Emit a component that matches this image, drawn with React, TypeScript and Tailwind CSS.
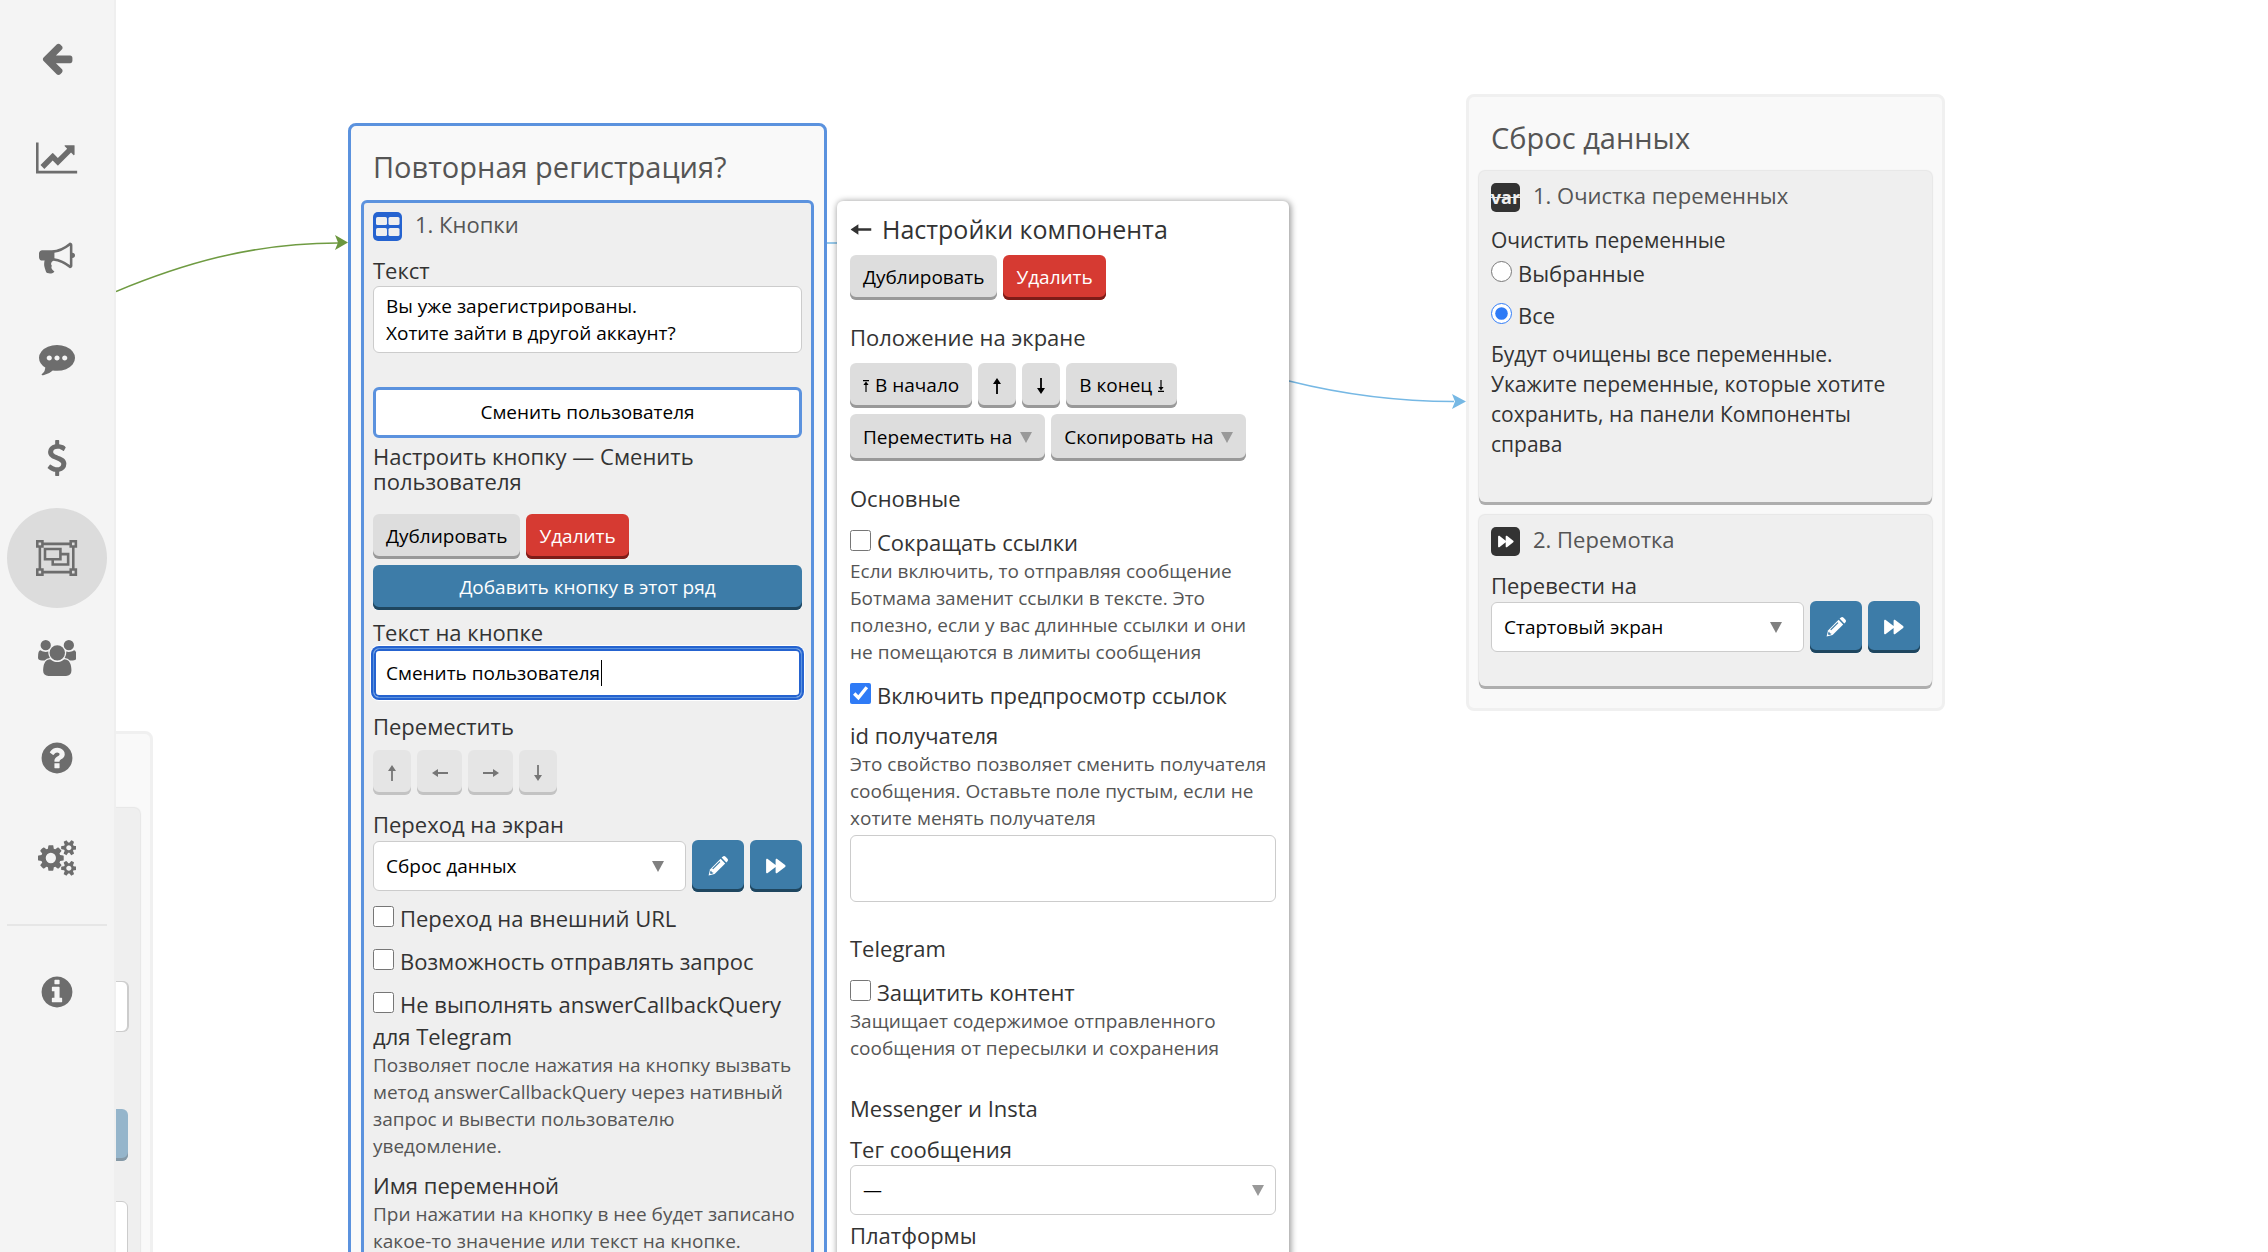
import type { ComponentProps, ReactNode } from "react";
import clsx from "clsx";

type Glyph = { w: number; d: string; rule?: "evenodd" };

// sidebar glyphs, drawn on a 1792 unit high grid
const GLYPHS = {
  back: {
    w: 1792,
    d: "M1664 896v128q0 53-32.5 90.5t-84.5 37.5h-704l293 294q38 36 38 90t-38 90l-75 76q-37 37-90 37-52 0-91-37l-651-652q-37-37-37-90 0-52 37-91l651-650q38-38 91-38 52 0 90 38l75 74q38 38 38 91t-38 91l-293 293h704q52 0 84.5 37.5t32.5 90.5z",
  },
  chart: {
    w: 2048,
    d: "M2048 1536v128h-2048v-1536h128v1408h1920zm-128-1248v435q0 21-19.5 29.5t-35.5-7.5l-121-121-633 633q-10 10-23 10t-23-10l-233-233-416 416-192-192 585-585q10-10 23-10t23 10l233 233 464-464-121-121q-16-16-7.5-35.5t29.5-19.5h435q14 0 23 9t9 23z",
  },
  bullhorn: {
    w: 1792,
    d: "M1664 640q53 0 90.5 37.5t37.5 90.5-37.5 90.5-90.5 37.5v384q0 52-38 90t-90 38q-417-347-812-380-58 19-91 66t-31 100.5 40 92.5q-20 33-23 65.5t6 58 33.5 55 48 50 61.5 50.5q-29 58-111.5 83t-168.5 11.5-132-55.5q-7-23-29.5-87.5t-32-94.5-23-89-15-101 3.5-98.5 22-110.5h-122q-66 0-113-47t-47-113v-192q0-66 47-113t113-47h480q435 0 896-384 52 0 90 38t38 90v384zm-128 604v-954q-394 302-768 343v270q377 42 768 341z",
  },
  comment: {
    w: 1792,
    d: "M640 896q0-53-37.5-90.5t-90.5-37.5-90.5 37.5-37.5 90.5 37.5 90.5 90.5 37.5 90.5-37.5 37.5-90.5zm384 0q0-53-37.5-90.5t-90.5-37.5-90.5 37.5-37.5 90.5 37.5 90.5 90.5 37.5 90.5-37.5 37.5-90.5zm384 0q0-53-37.5-90.5t-90.5-37.5-90.5 37.5-37.5 90.5 37.5 90.5 90.5 37.5 90.5-37.5 37.5-90.5zm384 0q0 174-120 321.5t-326 233-450 85.5q-110 0-211-18-173 173-435 221-52 10-86 13-12 1-22-6t-13-18q-4-15 20-37 5-5 23.5-21.5t25.5-23.5 23.5-25.5 24-31.5 20.5-37 20-48 14.5-57.5 12.5-72.5q-146-90-229.5-216.5t-83.5-269.5q0-174 120-321.5t326-233 450-85.5 450 85.5 326 233 120 321.5z",
  },
  dollar: {
    w: 1792,
    d: "M1362 1185q0 153-99.5 263.5t-258.5 136.5v175q0 14-9 23t-23 9h-135q-13 0-22.5-9.5t-9.5-22.5v-175q-66-9-127.5-31t-101.5-44.5-74-48-46.5-37.5-17.5-18q-17-21-2-41l103-135q7-10 23-12 15-2 24 9l2 2q113 99 243 125 37 8 74 8 81 0 142.5-43t61.5-122q0-28-15-53t-33.5-42-58.5-37.5-66-32-80-32.5q-39-16-61.5-25t-61.5-26.5-62.5-31-56.5-35.5-53.5-42.5-43.5-49-35.5-58-21-66.5-8.5-78q0-138 98-242t255-134v-180q0-13 9.5-22.5t22.5-9.5h135q14 0 23 9t9 23v176q57 6 110.5 23t87 33.5 63.5 37.5 39 29 15 14q17 18 5 38l-81 146q-8 15-23 16-14 3-27-7-3-3-14.5-12t-39-26.5-58.5-32-74.5-26-85.5-11.5q-95 0-155 43t-60 111q0 26 8.5 48t29.5 41.5 39.5 33 56 31 60.5 27 70 27.5q53 20 81 31.5t76 35 75.5 42.5 62 50 53 63.5 31.5 76.5 13 94z",
  },
  group: {
    w: 2048,
    rule: "evenodd",
    d: "M2048 384h-128v1024h128v384h-384v-128h-1280v128h-384v-384h128v-1024h-128v-384h384v128h1280v-128h384zM1792 128v128h128v-128zM128 128v128h128v-128zM128 1536v128h128v-128zM1792 1536v128h128v-128zM384 256v128h-128v1024h128v128h1280v-128h128v-1024h-128v-128zM1664 640v640h-896v-256h-384v-640h896v256zM512 512v384h640v-384zM1536 768h-256v256h-384v128h640z",
  },
  users: {
    w: 1920,
    d: "M593 896q-162 5-265 128h-134q-82 0-138-40.5t-56-118.5q0-353 124-353 6 0 43.500 21t97.500 42.500 119 21.500q67 0 133-23-5 37-5 66 0 139 81 256zm1071 637q0 120-73 189.500t-194 69.500h-874q-121 0-194-69.500t-73-189.500q0-53 3.500-103.500t14-109 26.500-108.500 43-97.500 62-81 85.500-53.500 111.500-20q10 0 43 21.500t73 48 107 48 135 21.500 135-21.500 107-48 73-48 43-21.500q61 0 111.500 20t85.500 53.500 62 81 43 97.500 26.500 108.500 14 109 3.500 103.500zm-1024-1277q0 106-75 181t-181 75-181-75-75-181 75-181 181-75 181 75 75 181zm704 384q0 159-112.500 271.500t-271.500 112.500-271.500-112.500-112.500-271.500 112.500-271.500 271.500-112.500 271.500 112.500 112.500 271.500zm576 225q0 78-56 118.500t-138 40.500h-134q-103-123-265-128 81-117 81-256 0-29-5-66 66 23 133 23 59 0 119-21.500t97.500-42.500 43.500-21q124 0 124 353zm-128-609q0 106-75 181t-181 75-181-75-75-181 75-181 181-75 181 75 75 181z",
  },
  question: {
    w: 1792,
    d: "M1024 1376v-192q0-14-9-23t-23-9h-192q-14 0-23 9t-9 23v192q0 14 9 23t23 9h192q14 0 23-9t9-23zm256-672q0-88-55.5-163t-138.5-116-170-41q-243 0-371 213-15 24 8 42l132 100q7 6 19 6 16 0 25-12 53-68 86-92 34-24 86-24 48 0 85.5 26t37.5 59q0 38-20 61t-68 45q-63 28-115.5 86.5t-52.5 125.5v36q0 14 9 23t23 9h192q14 0 23-9t9-23q0-19 21.5-49.5t54.5-49.5q32-18 49-28.5t46-35 44.5-48 28-60.5 12.5-81zm384 192q0 209-103 385.5t-279.5 279.5-385.5 103-385.5-103-279.5-279.5-103-385.5 103-385.5 279.5-279.5 385.5-103 385.5 103 279.5 279.5 103 385.5z",
  },
  cogs: {
    w: 1920,
    d: "M896 896q0-106-75-181t-181-75-181 75-75 181 75 181 181 75 181-75 75-181zm768 512q0-52-38-90t-90-38-90 38-38 90q0 53 37.5 90.5t90.5 37.5 90.5-37.5 37.5-90.5zm0-1024q0-52-38-90t-90-38-90 38-38 90q0 53 37.5 90.5t90.5 37.5 90.5-37.5 37.5-90.5zm-384 421v185q0 10-7 19.5t-16 10.5l-155 24q-11 35-32 76 34 48 90 115 7 11 7 20 0 12-7 19-23 30-82.5 89.5t-78.5 59.5q-11 0-21-7l-115-90q-37 19-77 31-11 108-23 155-7 24-30 24h-186q-11 0-20-7.5t-10-17.5l-23-153q-34-10-75-31l-118 89q-7 7-20 7-11 0-21-8-144-133-144-160 0-9 7-19 10-14 41-53t47-61q-23-44-35-82l-152-24q-10-1-17-9.5t-7-19.5v-185q0-10 7-19.5t16-10.5l155-24q11-35 32-76-34-48-90-115-7-11-7-20 0-12 7-20 22-30 82-89t79-59q11 0 21 7l115 90q34-18 77-32 11-108 23-154 7-24 30-24h186q11 0 20 7.5t10 17.5l23 153q34 10 75 31l118-89q8-7 20-7 11 0 21 8 144 133 144 160 0 8-7 19-12 16-42 54t-45 60q23 48 34 82l152 23q10 2 17 10.5t7 19.5zm640 533v140q0 16-149 31-12 27-30 52 51 113 51 138 0 4-4 7-122 71-124 71-8 0-46-47t-52-68q-20 2-30 2t-30-2q-14 21-52 68t-46 47q-2 0-124-71-4-3-4-7 0-25 51-138-18-25-30-52-149-15-149-31v-140q0-16 149-31 13-29 30-52-51-113-51-138 0-4 4-7 4-2 35-20t59-34 30-16q8 0 46 46.5t52 67.5q20-2 30-2t30 2q51-71 92-112l6-2q4 0 124 70 4 3 4 7 0 25-51 138 17 23 30 52 149 15 149 31zm0-1024v140q0 16-149 31-12 27-30 52 51 113 51 138 0 4-4 7-122 71-124 71-8 0-46-47t-52-68q-20 2-30 2t-30-2q-14 21-52 68t-46 47q-2 0-124-71-4-3-4-7 0-25 51-138-18-25-30-52-149-15-149-31v-140q0-16 149-31 13-29 30-52-51-113-51-138 0-4 4-7 4-2 35-20t59-34 30-16q8 0 46 46.5t52 67.5q20-2 30-2t30 2q51-71 92-112l6-2q4 0 124 70 4 3 4 7 0 25-51 138 17 23 30 52 149 15 149 31z",
  },
  info: {
    w: 1792,
    d: "M1152 1376v-160q0-14-9-23t-23-9h-96v-512q0-14-9-23t-23-9h-320q-14 0-23 9t-9 23v160q0 14 9 23t23 9h96v320h-96q-14 0-23 9t-9 23v160q0 14 9 23t23 9h448q14 0 23-9t9-23zm-128-896v-160q0-14-9-23t-23-9h-192q-14 0-23 9t-9 23v160q0 14 9 23t23 9h192q14 0 23-9t9-23zm640 416q0 209-103 385.5t-279.5 279.5-385.5 103-385.5-103-279.5-279.5-103-385.5 103-385.5 279.5-279.5 385.5-103 385.5 103 279.5 279.5 103 385.5z",
  },
} satisfies Record<string, Glyph>;

const NAV: { icon: keyof typeof GLYPHS; label: string; active?: boolean }[] = [
  { icon: "back", label: "Назад" },
  { icon: "chart", label: "Статистика" },
  { icon: "bullhorn", label: "Рассылки" },
  { icon: "comment", label: "Чаты" },
  { icon: "dollar", label: "Оплата" },
  { icon: "group", label: "Конструктор", active: true },
  { icon: "users", label: "Пользователи" },
  { icon: "question", label: "Помощь" },
  { icon: "cogs", label: "Настройки" },
];

function NavButton({
  icon,
  label,
  active,
}: {
  icon: keyof typeof GLYPHS;
  label: string;
  active?: boolean;
}) {
  const g: Glyph = GLYPHS[icon];
  return (
    <button
      type="button"
      aria-label={label}
      className={clsx(
        "flex size-[100px] items-center justify-center rounded-full text-[#6d6d6d]",
        active && "bg-[#dcdcdc]",
      )}
    >
      <svg viewBox={`0 0 ${g.w} 1792`} className="h-9" fill="currentColor" fillRule={g.rule}>
        <path d={g.d} />
      </svg>
    </button>
  );
}

/* ---- small drawings ---- */

const ROTATE = {
  up: "",
  right: "rotate-90",
  down: "rotate-180",
  left: "-rotate-90",
};

function Arrow({ dir, className = "h-4" }: { dir: keyof typeof ROTATE; className?: string }) {
  return (
    <svg viewBox="0 0 8 16" className={clsx(className, ROTATE[dir])} fill="currentColor">
      <path d="M4 0L8 6H4.9V16H3.1V6H0z" />
    </svg>
  );
}

// arrow that stops at a bar: "to the very top / bottom"
function EdgeArrow({ down }: { down?: boolean }) {
  return (
    <svg
      viewBox="0 0 6 12"
      className={clsx("h-3 shrink-0", down && "rotate-180")}
      fill="currentColor"
    >
      <path d="M0 0h6v1.2H0zM3 1.4L5.6 5H3.6v7H2.4V5H.4z" />
    </svg>
  );
}

function Triangle({ className }: { className?: string }) {
  return (
    <svg viewBox="0 0 12 11" className={clsx("h-[11px] w-3 shrink-0", className)} fill="currentColor">
      <path d="M0 0h12L6 11z" />
    </svg>
  );
}

function Pencil() {
  return (
    <svg viewBox="0 0 20 20" className="size-5" fill="none">
      <path
        d="M13.6 1.6l1-.9a2.2 2.2 0 0 1 3 0l1.7 1.7a2.2 2.2 0 0 1 0 3l-1 1z"
        fill="#fff"
      />
      <path d="M12.6 2.8L17.2 7.4 6.6 18 .6 19.4 2 13.4z" fill="#fff" />
      <path d="M12 5.6L4.7 12.9" stroke="#3d7ca8" strokeWidth="1.3" />
      <path d="M3.1 14.6l.7 1.6 1.7.6-.7.8-1.9.5-.9-.9.4-1.9z" fill="#3d7ca8" />
    </svg>
  );
}

function Forward({ className }: { className?: string }) {
  return (
    <svg viewBox="0 0 20 16" className={className} fill="currentColor">
      <path d="M1.7.9L9.6 7V1.8c0-1 .9-1.4 1.6-.9l7.9 6.2c.6.5.6 1.3 0 1.8l-7.9 6.2c-.7.5-1.6.1-1.6-.9V9l-7.9 6.1C1 15.6.1 15.2.1 14.2V1.8C.1.8 1 .4 1.7.9z" />
    </svg>
  );
}

/* ---- form parts ---- */

type ButtonProps = ComponentProps<"button"> & { tone?: "gray" | "red" | "blue" };

function Button({ tone = "gray", className, ...rest }: ButtonProps) {
  return (
    <button
      type="button"
      className={clsx(
        "flex min-h-[45px] items-center justify-center rounded-md px-[13px] text-[19px] disabled:opacity-50",
        tone === "gray" && "bg-[#ddd] text-black shadow-[inset_0_-3px_0_#999]",
        tone === "red" && "bg-[#d63a32] font-medium text-white shadow-[inset_0_-3px_0_#7d1c18]",
        tone === "blue" && "bg-[#3d7ca8] font-medium text-white shadow-[inset_0_-3px_0_#1f465f]",
        className,
      )}
      {...rest}
    />
  );
}

function Label({ htmlFor, children }: { htmlFor?: string; children: ReactNode }) {
  return (
    <label htmlFor={htmlFor} className="block text-[22px] leading-8">
      {children}
    </label>
  );
}

function Hint({ children }: { children: ReactNode }) {
  return <p className="pr-1 pb-px text-[19px] leading-[27px] text-[#555]">{children}</p>;
}

function Check({ children, ...rest }: ComponentProps<"input">) {
  return (
    <label className="block text-[22px] leading-8">
      <input
        type="checkbox"
        className="mr-[6px] inline-block size-[21px] align-baseline accent-[#2f7bf6]"
        {...rest}
      />
      {children}
    </label>
  );
}

function Select({
  id,
  value,
  arrow,
}: {
  id: string;
  value: string;
  arrow: string;
}) {
  return (
    <div className="relative min-w-0 flex-1">
      <select
        id={id}
        className="block h-[50px] w-full appearance-none rounded-md border border-[#ccc] bg-white px-3 text-[19px] text-black"
      >
        <option>{value}</option>
      </select>
      <Triangle className={clsx("pointer-events-none absolute top-5", arrow)} />
    </div>
  );
}

function ScreenPicker({ id, value }: { id: string; value: string }) {
  return (
    <div className="flex items-center gap-[6px]">
      <Select id={id} value={value} arrow="right-[22px] text-[#808080]" />
      <Button tone="blue" aria-label="Редактировать экран" className="h-[52px] w-[52px]">
        <Pencil />
      </Button>
      <Button tone="blue" aria-label="Перейти к экрану" className="h-[52px] w-[52px]">
        <Forward className="h-4 w-5 shrink-0" />
      </Button>
    </div>
  );
}

/* ---- canvas nodes ---- */

function Screen({
  title,
  active,
  className,
  children,
}: {
  title: string;
  active?: boolean;
  className: string;
  children: ReactNode;
}) {
  return (
    <section
      className={clsx(
        "absolute w-[479px] rounded-lg border-3 bg-[#f9f9f9] px-[10px] pb-[22px]",
        active ? "border-[#5b92de]" : "border-[#f0f0f0]",
        className,
      )}
    >
      <h2 className="min-h-[74px] px-3 pt-5 pb-3 text-[29px] leading-[42px] text-[#555]">{title}</h2>
      {children}
    </section>
  );
}

function Block({
  icon,
  title,
  active,
  children,
}: {
  icon: ReactNode;
  title: string;
  active?: boolean;
  children: ReactNode;
}) {
  return (
    <div
      className={clsx(
        "mb-[13px] rounded-md border-3 bg-[#efefef] px-[9px] pt-[9px] pb-[30px] last:mb-0",
        active
          ? "border-[#5b92de]"
          : "border-transparent shadow-[0_3px_0_#aeaeae,0_0_1px_1px_#e6e6e6]",
      )}
    >
      <div className="mb-[13px] flex items-start gap-[13px]">
        {icon}
        <h3 className="text-[22px] leading-6 text-[#555]">{title}</h3>
      </div>
      {children}
    </div>
  );
}

function GridIcon() {
  return (
    <svg viewBox="0 0 29 29" className="size-[29px]">
      <rect width="29" height="29" rx="5" fill="#2563d0" />
      <g fill="#efefef">
        <rect x="3" y="5" width="11" height="8" rx="1.5" />
        <rect x="15.5" y="5" width="11" height="8" rx="1.5" />
        <rect x="3" y="16" width="11" height="8" rx="1.5" />
        <rect x="15.5" y="16" width="11" height="8" rx="1.5" />
      </g>
    </svg>
  );
}

function ButtonsScreen() {
  return (
    <Screen title="Повторная регистрация?" active className="top-[123px] left-[232px]">
      <Block icon={<GridIcon />} title="1. Кнопки" active>
        <Label htmlFor="message">Текст</Label>
        <textarea
          id="message"
          className="block h-[67px] w-full resize-none overflow-hidden rounded-md border border-[#ccc] bg-white px-3 py-[6px] text-[19px] leading-[27px] text-black"
          defaultValue={"Вы уже зарегистрированы.\nХотите зайти в другой аккаунт?"}
        />

        <button
          type="button"
          className="mt-[34px] block h-[51px] w-full rounded-md border-3 border-[#5b92de] bg-white text-[19px] text-black"
        >
          Сменить пользователя
        </button>

        <p className="mt-[6px] text-[22px] leading-[25px]">
          Настроить кнопку — Сменить пользователя
        </p>
        <div className="mt-5 flex gap-[6px]">
          <Button>Дублировать</Button>
          <Button tone="red">Удалить</Button>
        </div>
        <Button tone="blue" className="mt-[6px] mb-[6px] w-full">
          Добавить кнопку в этот ряд
        </Button>

        <Label htmlFor="caption">Текст на кнопке</Label>
        <div className="relative">
          <input
            id="caption"
            type="text"
            defaultValue="Сменить пользователя"
            className="block h-[50px] w-full rounded-md border border-[#5b92de] bg-white px-3 text-[19px] text-black shadow-[0_0_0_2px_#2563d0,0_0_0_3px_#fff,inset_0_0_0_2px_#2563d0] outline-none"
          />
          {/* text caret */}
          <span className="absolute top-3 left-[228px] h-[26px] w-px bg-black" />
        </div>

        <div className="mt-3">
          <p className="text-[22px] leading-8">Переместить</p>
          <div className="mt-2 mb-[13px] flex gap-[6px]">
            <Button disabled aria-label="Вверх">
              <Arrow dir="up" className="h-4 w-3" />
            </Button>
            <Button disabled aria-label="Влево" className="w-[45px]">
              <Arrow dir="left" className="h-4" />
            </Button>
            <Button disabled aria-label="Вправо" className="w-[45px]">
              <Arrow dir="right" className="h-4" />
            </Button>
            <Button disabled aria-label="Вниз">
              <Arrow dir="down" className="h-4 w-3" />
            </Button>
          </div>
        </div>

        <Label htmlFor="target">Переход на экран</Label>
        <ScreenPicker id="target" value="Сброс данных" />

        <div className="mt-[10px] flex flex-col gap-[11px]">
          <Check>Переход на внешний URL</Check>
          <Check>Возможность отправлять запрос</Check>
          <Check>Не выполнять answerCallbackQuery для Telegram</Check>
        </div>
        <Hint>
          Позволяет после нажатия на кнопку вызвать метод answerCallbackQuery
          через нативный запрос и вывести пользователю уведомление.
        </Hint>

        <div className="mt-2">
          <Label htmlFor="variable">Имя переменной</Label>
          <Hint>
            При нажатии на кнопку в нее будет записано какое-то значение или
            текст на кнопке.
          </Hint>
          <input
            id="variable"
            type="text"
            className="mt-[2px] block h-[50px] w-full rounded-md border border-[#ccc] bg-white px-3 text-[19px] text-black"
          />
        </div>
      </Block>
    </Screen>
  );
}

function ResetScreen() {
  return (
    <Screen title="Сброс данных" className="top-[94px] left-[1350px]">
      <Block
        title="1. Очистка переменных"
        icon={
          <span className="flex size-[29px] items-center justify-center overflow-hidden rounded-[5px] bg-[#333] text-[18px] font-bold text-[#efefef] line-through">
            var
          </span>
        }
      >
        <fieldset>
          <legend className="mb-[2px] text-[21px] leading-[30px]">Очистить переменные</legend>
          <div className="flex flex-col gap-[10px]">
            <Check type="radio" name="vars">
              Выбранные
            </Check>
            <Check type="radio" name="vars" defaultChecked>
              Все
            </Check>
          </div>
        </fieldset>
        <p className="mt-2 mb-[10px] text-[21px] leading-[30px]">
          Будут очищены все переменные. Укажите переменные, которые хотите
          сохранить, на панели Компоненты справа
        </p>
      </Block>
      <Block
        title="2. Перемотка"
        icon={
          <span className="flex size-[29px] items-center justify-center rounded-[5px] bg-[#333] text-white">
            <Forward className="h-[13px] w-4" />
          </span>
        }
      >
        <Label htmlFor="jump">Перевести на</Label>
        <ScreenPicker id="jump" value="Стартовый экран" />
      </Block>
    </Screen>
  );
}

// mostly hidden behind the sidebar
function OffscreenScreen() {
  return (
    <Screen title="" className="top-[731px] -left-[442px]">
      <Block icon={null} title="">
        <div className="flex flex-col pt-[148px]">
          <input
            aria-label="Текст"
            className="h-[51px] rounded-md border border-[#ccc] bg-white shadow-[1px_0_0_#ccc]"
          />
          <Button tone="blue" disabled aria-label="Добавить" className="mt-[77px] h-[52px]" />
          <textarea
            aria-label="Сообщение"
            className="mt-10 h-[120px] resize-none rounded-md border border-[#ccc] bg-white"
          />
        </div>
      </Block>
    </Screen>
  );
}

function SettingsPanel() {
  return (
    <aside className="absolute top-[201px] left-[721px] w-[452px] rounded-md bg-white px-[13px] pt-[10px] pb-8 shadow-[1px_1px_6px_1px_rgba(0,0,0,0.4)]">
      <h2 className="flex items-center gap-[10px] text-[25px] leading-9">
        <button type="button" aria-label="Назад" className="flex h-9 w-[22px] items-center justify-center">
          <Arrow dir="left" className="h-[21px] w-3 shrink-0" />
        </button>
        Настройки компонента
      </h2>
      <div className="mt-2 flex gap-[6px]">
        <Button>Дублировать</Button>
        <Button tone="red">Удалить</Button>
      </div>

      <h3 className="mt-[21px] text-[22px] leading-8">Положение на экране</h3>
      <div className="mt-[10px] flex flex-wrap gap-[6px]">
        <Button className="gap-[6px]">
          <EdgeArrow />В начало
        </Button>
        <Button aria-label="Вверх">
          <Arrow dir="up" className="h-4 w-3" />
        </Button>
        <Button aria-label="Вниз">
          <Arrow dir="down" className="h-4 w-3" />
        </Button>
        <Button className="gap-[6px]">
          В конец
          <EdgeArrow down />
        </Button>
        <Button className="h-[47px] gap-2">
          Переместить на
          <Triangle className="text-[#999]" />
        </Button>
        <Button className="h-[47px] gap-2">
          Скопировать на
          <Triangle className="text-[#999]" />
        </Button>
      </div>

      <h3 className="mt-[21px] mb-3 text-[22px] leading-8">Основные</h3>
      <Check>Сокращать ссылки</Check>
      <Hint>
        Если включить, то отправляя сообщение Ботмама заменит ссылки в тексте.
        Это полезно, если у вас длинные ссылки и они не помещаются в лимиты
        сообщения
      </Hint>
      <div className="mt-3 mb-2">
        <Check defaultChecked>Включить предпросмотр ссылок</Check>
      </div>
      <Label htmlFor="recipient">id получателя</Label>
      <Hint>
        Это свойство позволяет сменить получателя сообщения. Оставьте поле
        пустым, если не хотите менять получателя
      </Hint>
      <textarea
        id="recipient"
        className="mt-[2px] block h-[67px] w-full resize-none rounded-md border border-[#ccc] bg-white px-3 py-[5px] text-[19px]"
      />

      <h3 className="mt-[30px] mb-3 text-[22px] leading-8">Telegram</h3>
      <Check>Защитить контент</Check>
      <Hint>Защищает содержимое отправленного сообщения от пересылки и сохранения</Hint>

      <h3 className="mt-[29px] mb-[9px] text-[22px] leading-8">Messenger и Insta</h3>
      <Label htmlFor="tag">Тег сообщения</Label>
      <Select id="tag" value="—" arrow="right-3 text-[#999]" />
      <h3 className="mt-1 text-[22px] leading-8">Платформы</h3>
    </aside>
  );
}

function Links() {
  return (
    <svg className="absolute inset-0 size-full" fill="none" strokeWidth="1.5">
      <path d="M0 291.5C64 265 134 243 222 243" stroke="#6f9b42" />
      <path d="M232 242.5L219 235l3 7.5-3 7.5z" fill="#6b963e" />
      <path d="M711 243H724C884 243 1004 340 1173 381C1229 395 1284 401.5 1338 401.5" stroke="#76b8e4" />
      <path d="M1350 401.5L1336 394l3 7.5-3 7.5z" fill="#76b8e4" />
    </svg>
  );
}

export default function App() {
  return (
    <div className="flex h-screen overflow-hidden bg-white font-['Open_Sans',sans-serif] text-[#333]">
      <nav className="flex w-[116px] shrink-0 flex-col items-start border-r-2 border-[#efefef] bg-[#f4f4f4] px-[7px] pt-2">
        {NAV.map((item) => (
          <NavButton key={item.icon} {...item} />
        ))}
        <hr className="my-4 w-[100px] border-t-2 border-[#e6e6e6]" />
        <NavButton icon="info" label="О сервисе" />
      </nav>

      <main className="relative flex-1 overflow-hidden">
        <OffscreenScreen />
        <Links />
        <ButtonsScreen />
        <ResetScreen />
        <SettingsPanel />
      </main>
    </div>
  );
}
